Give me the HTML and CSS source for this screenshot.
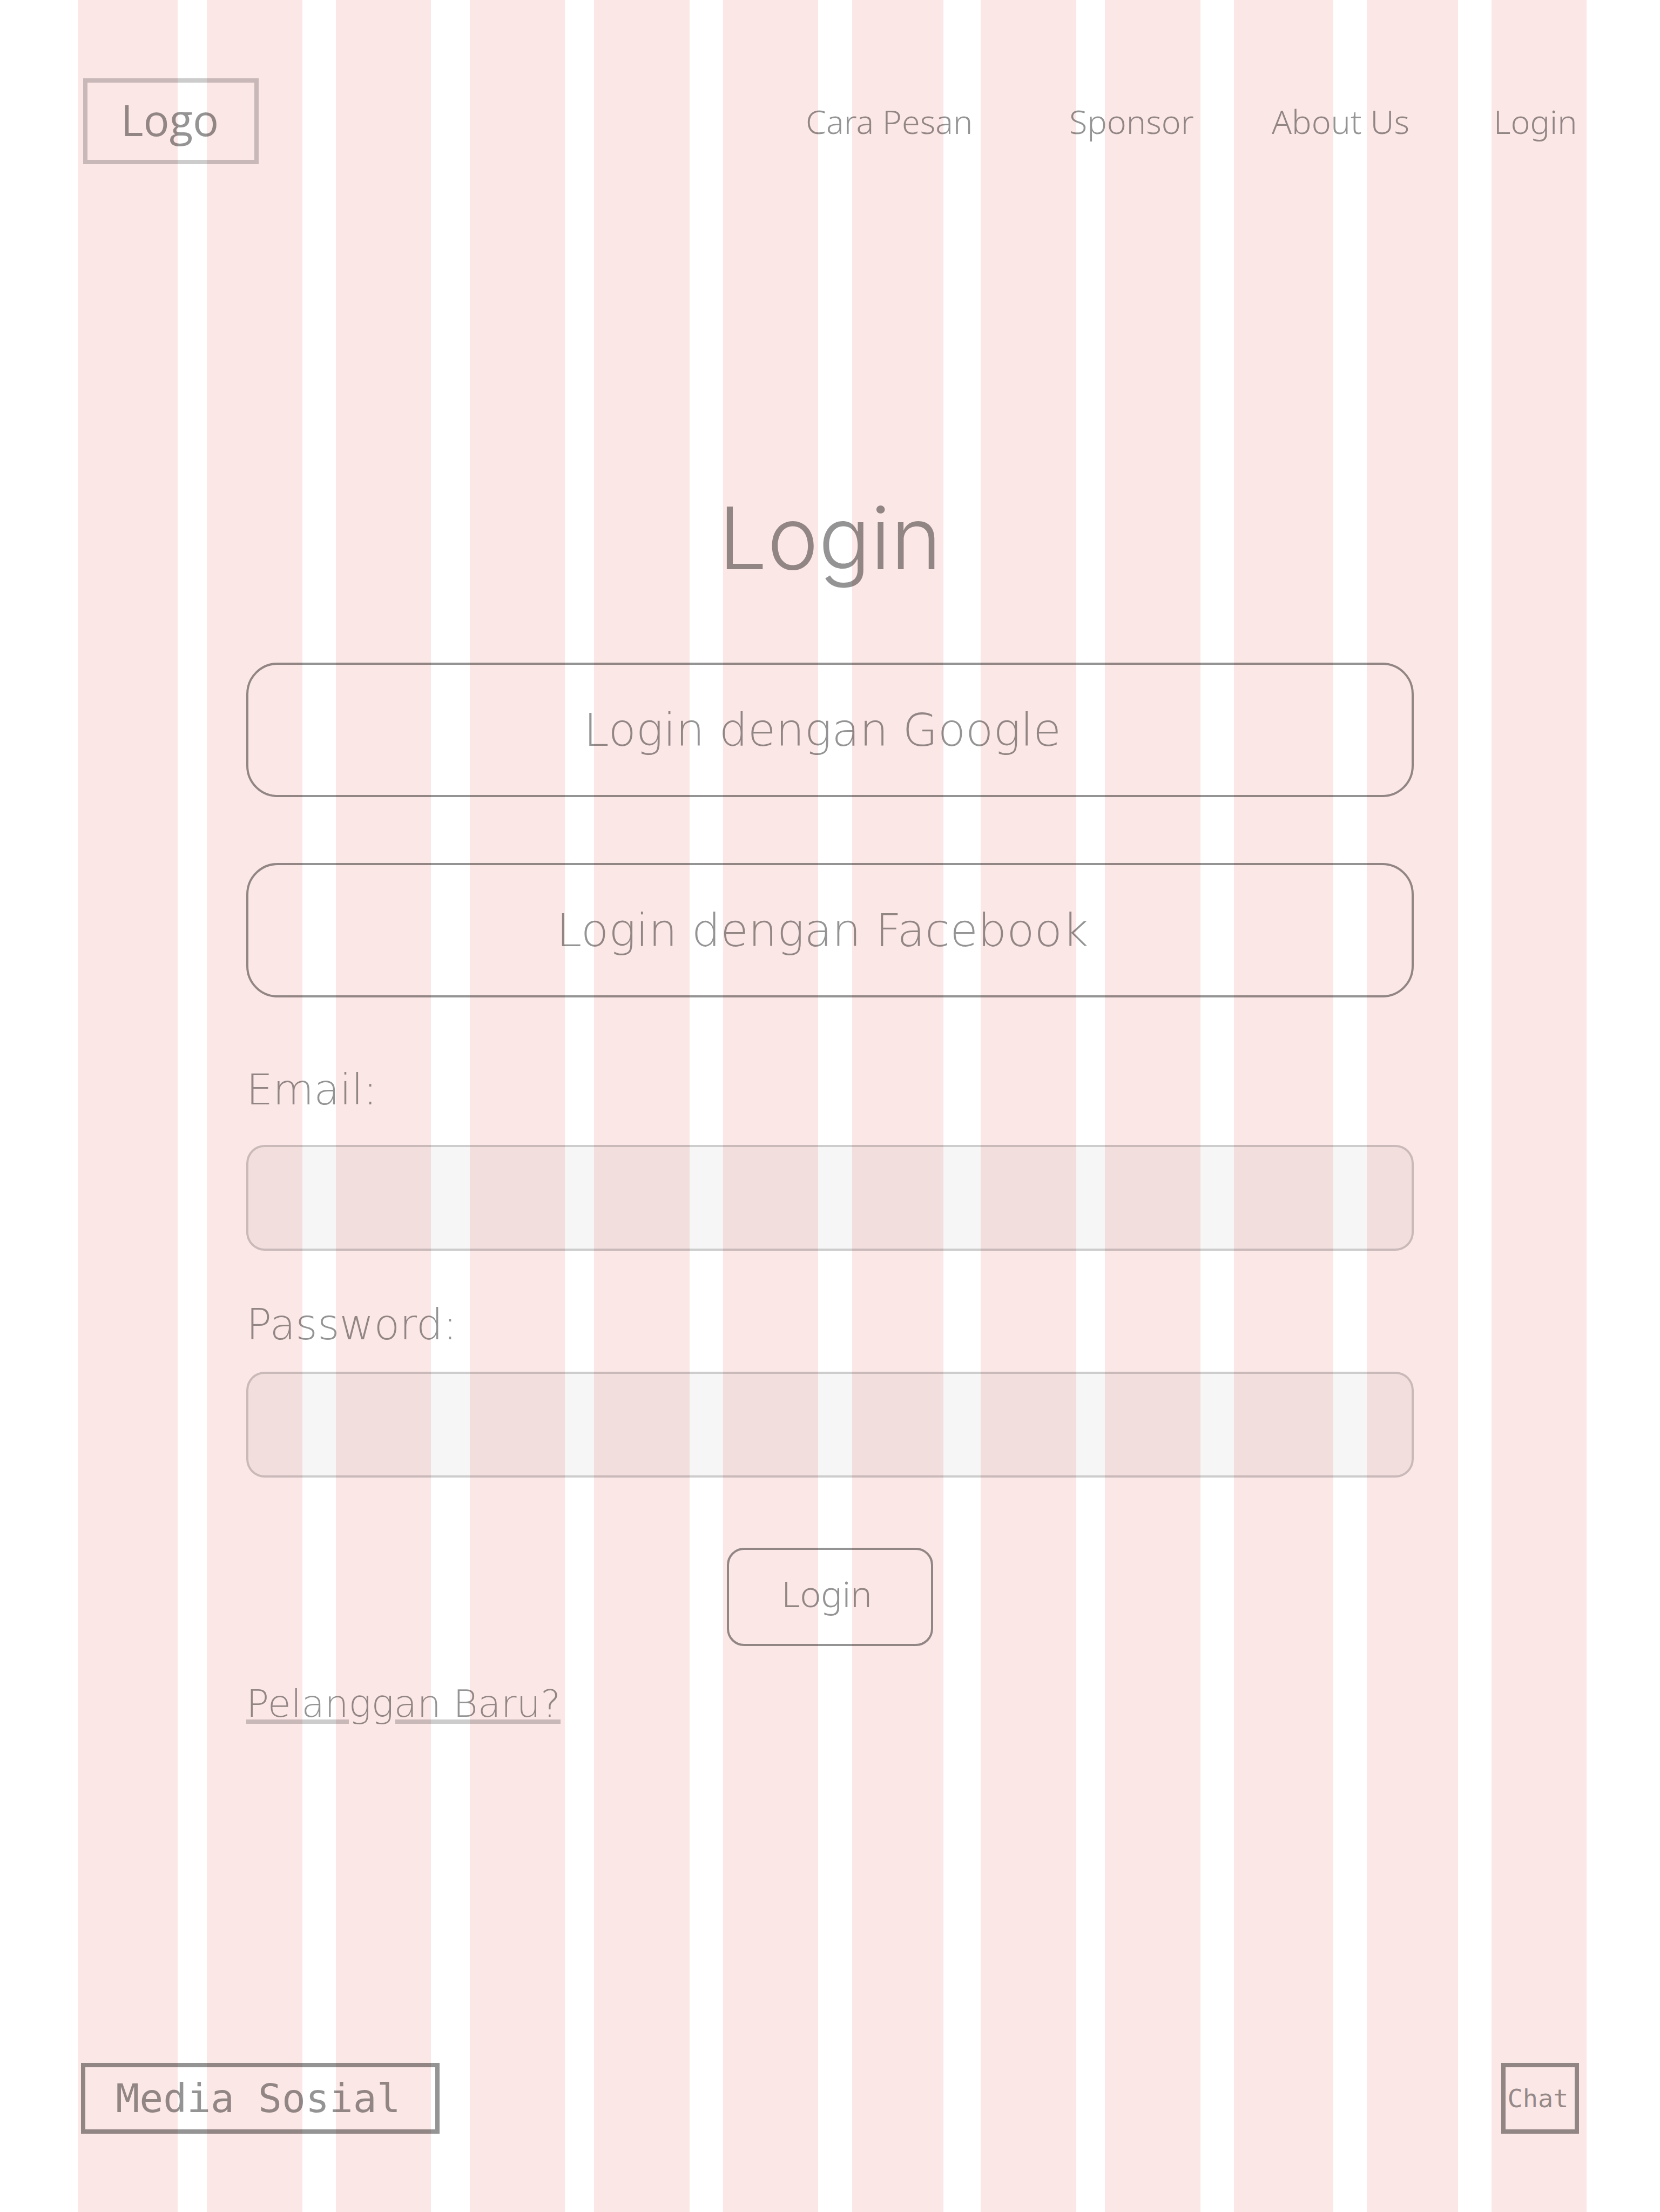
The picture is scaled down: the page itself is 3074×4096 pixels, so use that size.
FILE: index.html
```
<!DOCTYPE html>
<html lang="id">
<head>
  <meta charset="utf-8">
  <meta name="viewport" content="width=device-width, initial-scale=1">
  <title>Login</title>
  <link rel="stylesheet" href="styles.css">
</head>
<body>
  <div class="page">
    <div class="guides" aria-hidden="true">
      <span class="guide"></span><i></i>
      <span class="guide"></span><i></i>
      <span class="guide"></span><i></i>
      <span class="guide"></span><i></i>
      <span class="guide"></span><i></i>
      <span class="guide"></span><i></i>
      <span class="guide"></span><i></i>
      <span class="guide"></span><i></i>
      <span class="guide"></span><i></i>
      <span class="guide"></span><i></i>
      <span class="guide"></span><i></i>
      <span class="guide"></span>
    </div>

    <div class="content">
      <header class="header">
        <a class="logo" href="#">Logo</a>
        <nav class="nav">
          <a href="#">Cara Pesan</a>
          <a href="#">Sponsor</a>
          <a href="#">About Us</a>
          <a href="#">Login</a>
        </nav>
      </header>

      <main class="main">
        <h1 class="title">Login</h1>
        <div class="social">
          <button class="social-button" type="button">Login dengan Google</button>
          <button class="social-button" type="button">Login dengan Facebook</button>
        </div>
        <form class="form">
          <label class="label" for="email">Email:</label>
          <input class="field field-email" id="email" type="email">
          <label class="label" for="password">Password:</label>
          <input class="field field-password" id="password" type="password">
          <button class="submit" type="submit">Login</button>
        </form>
        <a class="signup" href="#">Pelanggan Baru?</a>
      </main>

      <footer class="footer">
        <a class="media" href="#">Media Sosial</a>
        <button class="chat" type="button">Chat</button>
      </footer>
    </div>
  </div>
</body>
</html>
```
FILE: styles.css
```
:root {
  --ink: rgba(0, 0, 0, .42);
  --ink-soft: rgba(0, 0, 0, .2);
  --column: #fbe7e6;
  --sans: "Noto Sans", "Open Sans", sans-serif;
  --thin: "DejaVu Sans", sans-serif;
  --mono: "DejaVu Sans Mono", monospace;
}

* {
  box-sizing: border-box;
}

body {
  margin: 0;
  background: #fff;
  color: var(--ink);
  font-family: var(--sans);
}

a {
  color: inherit;
  text-decoration: none;
}

button {
  margin: 0;
  background: none;
  color: inherit;
}

.page {
  display: grid;
  grid-template-columns: 100%;
  min-height: 100vh;
}

.guides,
.content {
  grid-area: 1 / 1;
}

/* Twelve layout columns behind the page */
.guides {
  display: grid;
  grid-template-columns:
    184fr 54fr 177fr 62fr 176fr 72fr 176fr 54fr 177fr 62fr 176fr 63fr
    169fr 69fr 177fr 53fr 177fr 62fr 184fr 62fr 169fr 62fr 176fr;
  padding: 0 136px 0 145px;
}

.guide {
  background: var(--column);
}

.content {
  display: flex;
  flex-direction: column;
}

.header {
  display: flex;
  align-items: center;
  justify-content: space-between;
  padding: 145px 133px 0 154px;
}

.logo {
  display: flex;
  align-items: center;
  justify-content: center;
  width: 325px;
  height: 159px;
  padding: 0 4px 8px 0;
  border: 8px solid var(--ink-soft);
  font: 500 80px/104px "Open Sans", sans-serif;
}

.nav {
  display: grid;
  grid-template-columns: 488px 375px 411px 175px;
  font-size: 61px;
  font-weight: 300;
  line-height: 84px;
}

.main {
  display: flex;
  flex-direction: column;
  padding: 592px 456px 120px;
}

.title {
  margin: 0 0 131px;
  font: 300 160px/200px Inter, sans-serif;
  text-align: center;
}

.social {
  display: grid;
  gap: 122px;
}

.social-button {
  height: 249px;
  padding: 0 28px 0 0;
  border: 4px solid var(--ink);
  border-radius: 58px;
  font: 200 84px/96px var(--thin);
}

.form {
  display: flex;
  flex-direction: column;
  padding-top: 125px;
}

.label {
  align-self: flex-start;
  font: 200 78px/92px var(--thin);
}

.field {
  width: 100%;
  height: 196px;
  padding: 0 40px;
  border: 4px solid rgba(0, 0, 0, .17);
  border-radius: 34px;
  background: rgba(0, 0, 0, .035);
  color: inherit;
  font: 200 78px/92px var(--thin);
}

.field-email {
  margin: 56px 0 91px;
}

.field-password {
  margin: 41px 0 130px;
}

.submit {
  align-self: center;
  width: 382px;
  height: 182px;
  padding: 0 12px 14px 0;
  border: 4px solid var(--ink);
  border-radius: 32px;
  font: 300 66px/84px var(--sans);
}

.signup {
  align-self: flex-start;
  margin-top: 65px;
  font: 200 70px/84px var(--thin);
  text-decoration: underline;
  text-decoration-color: var(--ink-soft);
  text-decoration-thickness: 8px;
  text-underline-offset: 5px;
}

.footer {
  display: flex;
  align-items: stretch;
  justify-content: space-between;
  margin-top: auto;
  padding: 0 150px 145px;
}

.media,
.chat {
  display: flex;
  align-items: center;
  justify-content: center;
  height: 131px;
  border: 8px solid var(--ink);
}

.media {
  width: 664px;
  padding-right: 8px;
  font: 400 73px/88px var(--mono);
}

.chat {
  width: 144px;
  padding: 0 8px 0 0;
  font: 400 47px/56px var(--mono);
}
```
